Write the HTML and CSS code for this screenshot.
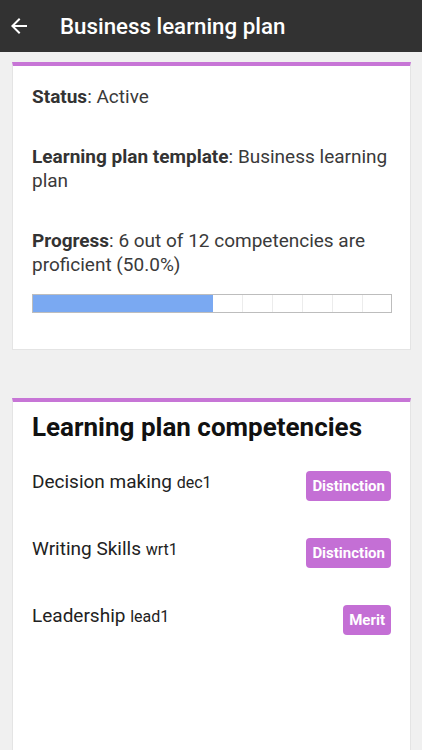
FILE: index.html
```
<!DOCTYPE html>
<html>
<head>
<meta charset="utf-8">
<link rel="stylesheet" href="styles.css">
</head>
<body>
<header class="topbar">
  <svg class="back" width="24" height="24" viewBox="0 0 24 24"><path d="M20 11H7.83l5.59-5.59L12 4l-8 8 8 8 1.41-1.41L7.83 13H20v-2z" fill="#fff"/></svg>
  <h1 class="title">Business learning plan</h1>
</header>
<main class="content">
  <section class="card info">
    <p class="field"><b>Status</b>: Active</p>
    <p class="field"><b>Learning plan template</b>: Business learning plan</p>
    <p class="field"><b>Progress</b>: 6 out of 12 competencies are proficient (50.0%)</p>
    <div class="bar">
      <span class="seg on"></span><span class="seg on"></span><span class="seg on"></span><span class="seg on"></span><span class="seg on"></span><span class="seg on"></span><span class="seg"></span><span class="seg"></span><span class="seg"></span><span class="seg"></span><span class="seg"></span><span class="seg last"></span>
    </div>
  </section>
  <section class="card comps">
    <h2 class="heading">Learning plan competencies</h2>
    <div class="row"><span class="name">Decision making <small>dec1</small></span><span class="badge">Distinction</span></div>
    <div class="row"><span class="name">Writing Skills <small>wrt1</small></span><span class="badge">Distinction</span></div>
    <div class="row"><span class="name">Leadership <small>lead1</small></span><span class="badge">Merit</span></div>
  </section>
</main>
</body>
</html>
```
FILE: styles.css
```
* { box-sizing: border-box; }
html, body { margin: 0; padding: 0; }
body {
  background: #f0f0f0;
  font-family: Roboto, "Liberation Sans", sans-serif;
  width: 422px;
  height: 750px;
  overflow: hidden;
}
.topbar {
  height: 52px;
  background: #323232;
  display: flex;
  align-items: center;
  padding-left: 7px;
}
.back { width: 24px; height: 24px; }
.title {
  margin: 0 0 0 29px;
  color: #fff;
  font-size: 22.3px;
  font-weight: 500;
}
.content {
  padding: 10px 11px 0 12px;
  display: flex;
  flex-direction: column;
  gap: 48px;
}
.card {
  background: #fff;
  border: 1px solid #e4e4e4;
  border-top: 4px solid #c775d6;
  padding: 19px 19px 36px 19px;
}
.field {
  margin: 0 0 36px 0;
  font-size: 19px;
  line-height: 24px;
  color: #3a3a3a;
}
.field b { color: #333; }
.field:last-of-type { margin-bottom: 17px; }
.bar {
  display: flex;
  width: 360px;
  height: 19px;
  border: 1px solid #bdbdbd;
  background: #fff;
}
.seg { width: 30px; flex: none; border-right: 1px solid #ececec; }
.seg.last { flex: 1; border-right: none; }
.seg.on { background: #7aa9f2; border-right: none; }
.comps { height: 352px; padding-top: 8px; border-bottom: none; }
.heading {
  margin: 0 0 26px 0;
  font-size: 26px;
  font-weight: 700;
  color: #111;
  line-height: 34px;
}
.row {
  display: flex;
  justify-content: space-between;
  align-items: flex-start;
  height: 67px;
}
.name { font-size: 19px; color: #222; line-height: 24px; }
.name small { font-size: 16px; }
.badge {
  background: #c46fd5;
  color: #fff;
  font-weight: 700;
  font-size: 15px;
  border-radius: 4px;
  height: 30px;
  line-height: 30px;
  padding: 0 6px;
  margin-top: 1px;
}
```
